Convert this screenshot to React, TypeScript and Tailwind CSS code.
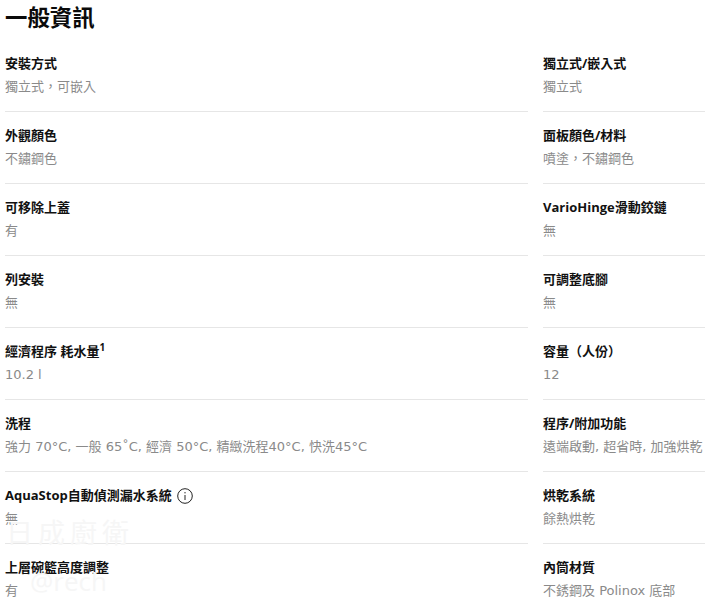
import { ReactNode } from "react";

const FONT = "font-['Open_Sans','Noto_Sans_CJK_TC',sans-serif]";

type Spec = { label: ReactNode; value: string };

const leftSpecs: Spec[] = [
  { label: "安裝方式", value: "獨立式，可嵌入" },
  { label: "外觀顏色", value: "不鏽鋼色" },
  { label: "可移除上蓋", value: "有" },
  { label: "列安裝", value: "無" },
  {
    label: (
      <>
        經濟程序 耗水量<sup className="text-[10px] leading-none -top-[5px]">1</sup>
      </>
    ),
    value: "10.2 l",
  },
  { label: "洗程", value: "強力 70°C, 一般 65˚C, 經濟 50°C, 精緻洗程40°C, 快洗45°C" },
  {
    label: (
      <span className="flex items-center gap-[5px]">
        AquaStop自動偵測漏水系統
        <svg width="16" height="16" viewBox="0 0 16 16" fill="none" stroke="#222" strokeWidth="1">
          <circle cx="8" cy="8" r="7.3" />
          <path d="M8 7v5M8 4v1.4" />
        </svg>
      </span>
    ),
    value: "無",
  },
  { label: "上層碗籃高度調整", value: "有" },
];

const rightSpecs: Spec[] = [
  { label: "獨立式/嵌入式", value: "獨立式" },
  { label: "面板顏色/材料", value: "噴塗，不鏽鋼色" },
  { label: "VarioHinge滑動鉸鏈", value: "無" },
  { label: "可調整底腳", value: "無" },
  { label: "容量（人份）", value: "12" },
  { label: "程序/附加功能", value: "遠端啟動, 超省時, 加強烘乾" },
  { label: "烘乾系統", value: "餘熱烘乾" },
  { label: "內筒材質", value: "不銹鋼及 Polinox 底部" },
];

function SpecRow({ spec, last }: { spec: Spec; last: boolean }) {
  return (
    <div className={`h-[72px] pt-[13px] ${last ? "" : "border-b border-[#e6e6e6]"}`}>
      <div className="h-[22px] flex items-center text-[13px] font-bold text-[#111] whitespace-nowrap">
        {spec.label}
      </div>
      <div className="mt-px h-[22px] flex items-center font-['DejaVu_Sans','Noto_Sans_CJK_TC',sans-serif] text-[13px] text-[#8a8a8a] whitespace-nowrap">
        {spec.value}
      </div>
    </div>
  );
}

export default function App() {
  return (
    <div className={`relative h-[600px] w-[705px] overflow-hidden bg-white pl-[5px] ${FONT}`}>
      <h2 className="h-[40px] pt-[3px] text-[22.4px] leading-[30px] font-bold text-[#0a0a0a]">一般資訊</h2>
      <div className="flex gap-[15px]">
        <div className="w-[523px]">
          {leftSpecs.map((s, i) => (
            <SpecRow key={i} spec={s} last={i === leftSpecs.length - 1} />
          ))}
        </div>
        <div className="w-[162px]">
          {rightSpecs.map((s, i) => (
            <SpecRow key={i} spec={s} last={i === rightSpecs.length - 1} />
          ))}
        </div>
      </div>
      {/* faint watermark */}
      <div className="absolute left-[6px] top-[516px] text-[27px] leading-[34px] tracking-[5px] text-[#f6f6f6]">日成廚衛</div>
      <div className="absolute left-[30px] top-[564px] text-[26px] leading-[34px] text-[#f6f6f6]">@rech</div>
    </div>
  );
}
